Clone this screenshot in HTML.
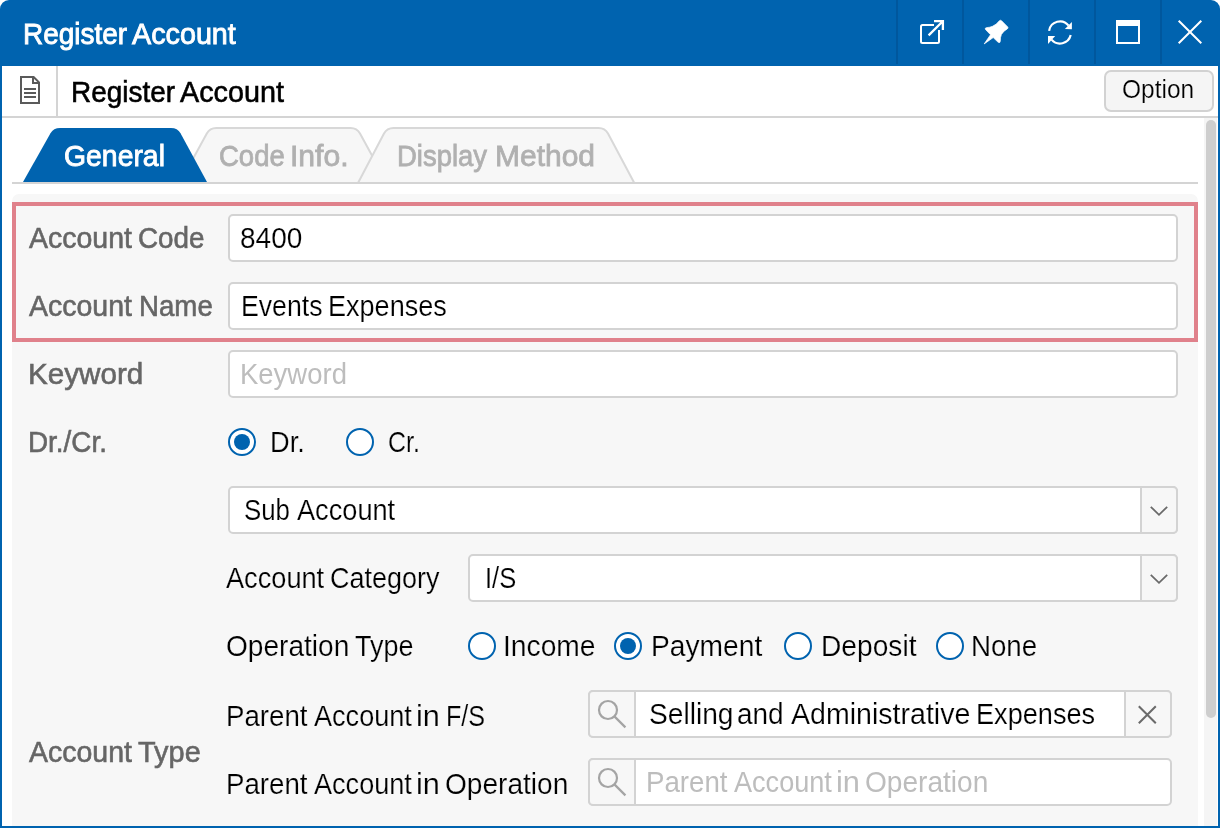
<!DOCTYPE html>
<html lang="en">
<head>
<meta charset="utf-8">
<title>Register Account</title>
<style>
html,body{margin:0;padding:0;}
body{width:1220px;height:828px;overflow:hidden;background:#fff;font-family:"Liberation Sans",sans-serif;position:relative;}
#win{position:absolute;left:0;top:0;width:1220px;height:828px;overflow:hidden;background:#fff;}
.abs{position:absolute;}
.t{position:absolute;display:block;height:1px;line-height:1px;white-space:nowrap;transform-origin:0 0;font-weight:normal;filter:grayscale(1);}
#titlebar{left:0;top:0;width:1220px;height:66px;background:#0063af;border-radius:9px 9px 0 0;}
.bl{background:#0063af;}
.tsep{top:0;width:2px;height:64px;background:#00579d;}
.ln{background:#d4d4d4;}
#panel{left:12px;top:194px;width:1186px;height:640px;background:#f7f7f7;border-radius:7px 7px 0 0;}
#hl{left:12px;top:202px;width:1178px;height:132px;border:4px solid #e0818b;}
.inp{background:#fff;border:2px solid #d3d3d3;border-radius:5px;box-sizing:border-box;}
.radio{width:28px;height:28px;box-sizing:border-box;border:2px solid #0063af;border-radius:50%;background:#fff;}
.radio.on::after{content:"";position:absolute;left:4px;top:4px;width:16px;height:16px;border-radius:50%;background:#0063af;}
.btnbox{background:#f7f7f7;border:2px solid #d3d3d3;box-sizing:border-box;}
svg{position:absolute;overflow:visible;}
</style>
</head>
<body>
<div id="win">
  <!-- title bar -->
  <div id="titlebar" class="abs"></div>
  <div class="abs tsep" style="left:896px"></div>
  <div class="abs tsep" style="left:962px"></div>
  <div class="abs tsep" style="left:1028px"></div>
  <div class="abs tsep" style="left:1094px"></div>
  <div class="abs tsep" style="left:1160px"></div>
  <svg class="abs" style="left:0;top:0" width="1220" height="66" viewBox="0 0 1220 66" fill="none" stroke="#fff" stroke-width="2">
    <!-- popup -->
    <path d="M934,25 L922.5,25 Q921,25 921,26.5 L921,41.5 Q921,43 922.5,43 L937.5,43 Q939,43 939,41.5 L939,30"/>
    <path stroke-width="2.3" d="M928.6,35.4 L942.8,21.2 M934,21.1 L942.9,21.1 L942.9,30"/>
    <!-- pin -->
    <path stroke="#fff" stroke-width="0.7" stroke-linejoin="round" fill="#fff" d="M999.2,20.9 Q1000.4,19.6 1001.6,20.8 L1007.7,26.9 Q1008.7,28.1 1007.3,28.9 Q1003.2,31 1001.4,34.5 Q1000.2,37.5 1000.3,41 Q1000.2,43.4 998.2,42.3 L993.2,37.6 L984.2,43.9 L990.5,34.7 L985.5,29.5 Q984.6,28 986.3,27.7 Q990,27.4 992.5,26.3 Q996.5,24.6 999.2,20.9 Z"/>
    <!-- refresh -->
    <path stroke-width="2.2" d="M1049.1,30.8 A11,11 0 0 1 1068.6,25.6"/>
    <path stroke="none" fill="#fff" d="M1071.9,21.9 L1071.9,29.2 L1064.9,29 Z"/>
    <path stroke-width="2.2" d="M1070.7,35.1 A11,11 0 0 1 1051.6,39.6"/>
    <path stroke="none" fill="#fff" d="M1048,36.1 L1055.2,36.1 L1048,43.9 Z"/>
    <!-- maximize -->
    <rect x="1117" y="21" width="22" height="22"/>
    <rect x="1116" y="20" width="24" height="6" fill="#fff" stroke="none"/>
    <!-- close -->
    <path d="M1178.7,20.7 L1201.3,43.3 M1201.3,20.7 L1178.7,43.3"/>
  </svg>
  <!-- doc icon -->
  <svg class="abs" style="left:0;top:66px" width="60" height="50" viewBox="0 66 60 50" fill="none" stroke="#5a5a5a" stroke-width="2">
    <path d="M21,77 L33.6,77 L39,82.4 L39,103 L21,103 Z"/>
    <path d="M33,77 L33,83 L39,83"/>
    <path d="M24,89 L36,89 M24,93 L36,93 M24,97 L36,97"/>
  </svg>
  <!-- window borders -->
  <div class="abs bl" style="left:0;top:60px;width:2px;height:768px"></div>
  <div class="abs bl" style="left:1218px;top:60px;width:2px;height:768px"></div>
  <!-- toolbar -->
  <div class="abs ln" style="left:2px;top:116px;width:1216px;height:2px"></div>
  <div class="abs ln" style="left:56px;top:66px;width:2px;height:50px"></div>
  <div class="abs" style="left:1104px;top:70px;width:110px;height:42px;box-sizing:border-box;border:2px solid #d2d2d2;border-radius:7px;background:#f5f5f5"></div>
  <!-- scrollbar -->
  <div class="abs" style="left:1204px;top:118px;width:13px;height:708px;background:#f5f5f5"></div>
  <div class="abs" style="left:1206px;top:120px;width:10px;height:598px;background:#cecece;border-radius:5px"></div>
  <!-- tabs -->
  <svg class="abs" style="left:0;top:0" width="1220" height="200" viewBox="0 0 1220 200">
    <!-- tab 2: Code Info. -->
    <path d="M179.8,183 L206.8,133.5 Q209.8,128 216.3,128 L350.5,128 Q357,128 360,133.5 L387,183 Z" fill="#f7f7f7" stroke="#d8d8d8" stroke-width="2" stroke-linejoin="round"/>
    <!-- tab 3: Display Method -->
    <path d="M358,183 L384,133.5 Q387,128 393.5,128 L598.5,128 Q605,128 608,133.5 L634.3,183 Z" fill="#f7f7f7" stroke="#d8d8d8" stroke-width="2" stroke-linejoin="round"/>
    <!-- tab 1: General (active) -->
    <path d="M23,182 L50.5,133.3 Q53.5,128 60,128 L171,128 Q177.5,128 180.5,133.3 L207,182 Z" fill="#0063af"/>
  </svg>
  <div class="abs ln" style="left:12px;top:182px;width:1186px;height:2px"></div>
  <!-- panel -->
  <div id="panel" class="abs"></div>
  <div id="hl" class="abs"></div>
  <!-- inputs -->
  <div class="abs inp" style="left:228px;top:214px;width:950px;height:48px"></div>
  <div class="abs inp" style="left:228px;top:282px;width:950px;height:48px"></div>
  <div class="abs inp" style="left:228px;top:350px;width:950px;height:48px"></div>
  <div class="abs radio on" style="left:228px;top:428px"></div>
  <div class="abs radio" style="left:346px;top:428px"></div>
  <!-- selects -->
  <div class="abs inp" style="left:228px;top:486px;width:950px;height:48px"></div>
  <div class="abs btnbox" style="left:1140px;top:486px;width:38px;height:48px;border-radius:0 5px 5px 0"></div>
  <div class="abs inp" style="left:468px;top:554px;width:710px;height:48px"></div>
  <div class="abs btnbox" style="left:1140px;top:554px;width:38px;height:48px;border-radius:0 5px 5px 0"></div>
  <!-- operation type radios -->
  <div class="abs radio" style="left:468px;top:632px"></div>
  <div class="abs radio on" style="left:614px;top:632px"></div>
  <div class="abs radio" style="left:784px;top:632px"></div>
  <div class="abs radio" style="left:936px;top:632px"></div>
  <!-- search boxes -->
  <div class="abs inp" style="left:588px;top:690px;width:584px;height:48px"></div>
  <div class="abs btnbox" style="left:588px;top:690px;width:48px;height:48px;border-radius:5px 0 0 5px"></div>
  <div class="abs btnbox" style="left:1124px;top:690px;width:48px;height:48px;border-radius:0 5px 5px 0"></div>
  <div class="abs inp" style="left:588px;top:758px;width:584px;height:48px"></div>
  <div class="abs btnbox" style="left:588px;top:758px;width:48px;height:48px;border-radius:5px 0 0 5px"></div>
  <svg class="abs" style="left:0;top:480px" width="1220" height="348" viewBox="0 480 1220 348" fill="none" stroke="#6a6a6a" stroke-width="2">
    <path stroke-width="1.8" d="M1150.8,506.8 L1159,514.8 L1167.2,506.8"/>
    <path stroke-width="1.8" d="M1150.8,574.8 L1159,582.8 L1167.2,574.8"/>
    <g stroke="#a4a4a4" stroke-width="2.2">
      <circle cx="608" cy="710" r="9"/><path d="M614.4,716.4 L625.4,727.4"/>
      <circle cx="608" cy="778" r="9"/><path d="M614.4,784.4 L625.4,795.4"/>
    </g>
    <path d="M1138.8,706.2 L1155.8,723.2 M1155.8,706.2 L1138.8,723.2"/>
  </svg>
  <!-- bottom border -->
  <div class="abs bl" style="left:0;top:826px;width:1220px;height:2px"></div>
  <!-- texts -->
<span class="t" style="left:22.68px;top:33.0px;font-size:30.2px;color:#ffffff;transform:scaleX(0.9257);-webkit-text-stroke:0.9px #ffffff;">Register</span>
<span class="t" style="left:131.56px;top:33.0px;font-size:30.2px;color:#ffffff;transform:scaleX(0.9520);-webkit-text-stroke:0.9px #ffffff;">Account</span>
<span class="t" style="left:70.56px;top:91.0px;font-size:30.2px;color:#000000;transform:scaleX(0.9261);-webkit-text-stroke:0.6px #000000;">Register</span>
<span class="t" style="left:179.74px;top:91.0px;font-size:30.2px;color:#000000;transform:scaleX(0.9524);-webkit-text-stroke:0.6px #000000;">Account</span>
<span class="t" style="left:1122.25px;top:88.5px;font-size:25.8px;color:#000000;transform:scaleX(0.9488);-webkit-text-stroke:0.2px #f5f5f5;">Option</span>
<span class="t" style="left:64.33px;top:155.0px;font-size:30.2px;color:#ffffff;transform:scaleX(0.9399);-webkit-text-stroke:0.9px #ffffff;">General</span>
<span class="t" style="left:218.53px;top:155.0px;font-size:30.2px;color:#b0b0b0;transform:scaleX(0.9109);-webkit-text-stroke:0.8px #b0b0b0;">Code</span>
<span class="t" style="left:289.57px;top:155.0px;font-size:30.2px;color:#b0b0b0;transform:scaleX(0.9978);-webkit-text-stroke:0.8px #b0b0b0;">Info.</span>
<span class="t" style="left:396.58px;top:155.0px;font-size:30.2px;color:#b0b0b0;transform:scaleX(0.9090);-webkit-text-stroke:0.8px #b0b0b0;">Display</span>
<span class="t" style="left:494.68px;top:155.0px;font-size:30.2px;color:#b0b0b0;transform:scaleX(0.9936);-webkit-text-stroke:0.8px #b0b0b0;">Method</span>
<span class="t" style="left:28.54px;top:237.0px;font-size:30.2px;color:#666666;transform:scaleX(0.9441);-webkit-text-stroke:0.6px #666666;">Account</span>
<span class="t" style="left:138.04px;top:237.0px;font-size:30.2px;color:#666666;transform:scaleX(0.9218);-webkit-text-stroke:0.6px #666666;">Code</span>
<span class="t" style="left:28.54px;top:305.0px;font-size:30.2px;color:#666666;transform:scaleX(0.9441);-webkit-text-stroke:0.6px #666666;">Account</span>
<span class="t" style="left:138.58px;top:305.0px;font-size:30.2px;color:#666666;transform:scaleX(0.9161);-webkit-text-stroke:0.6px #666666;">Name</span>
<span class="t" style="left:28.12px;top:373.0px;font-size:30.2px;color:#666666;transform:scaleX(0.9822);-webkit-text-stroke:0.6px #666666;">Keyword</span>
<span class="t" style="left:28.26px;top:441.0px;font-size:30.2px;color:#666666;transform:scaleX(0.9222);-webkit-text-stroke:0.6px #666666;">Dr./Cr.</span>
<span class="t" style="left:28.54px;top:751.0px;font-size:30.2px;color:#666666;transform:scaleX(0.9441);-webkit-text-stroke:0.6px #666666;">Account</span>
<span class="t" style="left:138.19px;top:751.0px;font-size:30.2px;color:#666666;transform:scaleX(0.9583);-webkit-text-stroke:0.6px #666666;">Type</span>
<span class="t" style="left:240.22px;top:237.0px;font-size:30.2px;color:#000000;transform:scaleX(0.9284);-webkit-text-stroke:0.2px #ffffff;">8400</span>
<span class="t" style="left:240.52px;top:305.0px;font-size:30.2px;color:#000000;transform:scaleX(0.8829);-webkit-text-stroke:0.2px #ffffff;">Events</span>
<span class="t" style="left:327.59px;top:305.0px;font-size:30.2px;color:#000000;transform:scaleX(0.8962);-webkit-text-stroke:0.2px #ffffff;">Expenses</span>
<span class="t" style="left:240.25px;top:373.0px;font-size:30.2px;color:#bdbdbd;transform:scaleX(0.9106);">Keyword</span>
<span class="t" style="left:269.67px;top:441.0px;font-size:30.2px;color:#000000;transform:scaleX(0.9014);-webkit-text-stroke:0.2px #f7f7f7;">Dr.</span>
<span class="t" style="left:388.33px;top:441.0px;font-size:30.2px;color:#000000;transform:scaleX(0.8274);-webkit-text-stroke:0.2px #f7f7f7;">Cr.</span>
<span class="t" style="left:244.44px;top:509.0px;font-size:30.2px;color:#000000;transform:scaleX(0.8562);-webkit-text-stroke:0.2px #ffffff;">Sub</span>
<span class="t" style="left:296.60px;top:509.0px;font-size:30.2px;color:#000000;transform:scaleX(0.9000);-webkit-text-stroke:0.2px #ffffff;">Account</span>
<span class="t" style="left:226.30px;top:577.0px;font-size:30.2px;color:#000000;transform:scaleX(0.9000);-webkit-text-stroke:0.2px #f7f7f7;">Account</span>
<span class="t" style="left:329.64px;top:577.0px;font-size:30.2px;color:#000000;transform:scaleX(0.8933);-webkit-text-stroke:0.2px #f7f7f7;">Category</span>
<span class="t" style="left:484.61px;top:577.0px;font-size:30.2px;color:#000000;transform:scaleX(0.8454);-webkit-text-stroke:0.2px #ffffff;">I/S</span>
<span class="t" style="left:225.88px;top:645.0px;font-size:30.2px;color:#000000;transform:scaleX(0.9304);-webkit-text-stroke:0.2px #f7f7f7;">Operation</span>
<span class="t" style="left:355.18px;top:645.0px;font-size:30.2px;color:#000000;transform:scaleX(0.8937);-webkit-text-stroke:0.2px #f7f7f7;">Type</span>
<span class="t" style="left:503.30px;top:645.0px;font-size:30.2px;color:#000000;transform:scaleX(0.9345);-webkit-text-stroke:0.2px #f7f7f7;">Income</span>
<span class="t" style="left:650.90px;top:645.0px;font-size:30.2px;color:#000000;transform:scaleX(0.9340);-webkit-text-stroke:0.2px #f7f7f7;">Payment</span>
<span class="t" style="left:820.60px;top:645.0px;font-size:30.2px;color:#000000;transform:scaleX(0.9327);-webkit-text-stroke:0.2px #f7f7f7;">Deposit</span>
<span class="t" style="left:971.14px;top:645.0px;font-size:30.2px;color:#000000;transform:scaleX(0.9167);-webkit-text-stroke:0.2px #f7f7f7;">None</span>
<span class="t" style="left:226.04px;top:715.0px;font-size:30.2px;color:#000000;transform:scaleX(0.9167);-webkit-text-stroke:0.2px #f7f7f7;">Parent</span>
<span class="t" style="left:313.80px;top:715.0px;font-size:30.2px;color:#000000;transform:scaleX(0.8972);-webkit-text-stroke:0.2px #f7f7f7;">Account</span>
<span class="t" style="left:415.78px;top:715.0px;font-size:30.2px;color:#000000;transform:scaleX(1.0190);-webkit-text-stroke:0.2px #f7f7f7;">in</span>
<span class="t" style="left:445.54px;top:715.0px;font-size:30.2px;color:#000000;transform:scaleX(0.8327);-webkit-text-stroke:0.2px #f7f7f7;">F/S</span>
<span class="t" style="left:648.52px;top:713.0px;font-size:30.2px;color:#000000;transform:scaleX(0.9327);-webkit-text-stroke:0.2px #ffffff;">Selling</span>
<span class="t" style="left:736.93px;top:713.0px;font-size:30.2px;color:#000000;transform:scaleX(0.9257);-webkit-text-stroke:0.2px #ffffff;">and</span>
<span class="t" style="left:791.10px;top:713.0px;font-size:30.2px;color:#000000;transform:scaleX(0.9460);-webkit-text-stroke:0.2px #ffffff;">Administrative</span>
<span class="t" style="left:976.08px;top:713.0px;font-size:30.2px;color:#000000;transform:scaleX(0.8985);-webkit-text-stroke:0.2px #ffffff;">Expenses</span>
<span class="t" style="left:226.04px;top:783.0px;font-size:30.2px;color:#000000;transform:scaleX(0.9167);-webkit-text-stroke:0.2px #f7f7f7;">Parent</span>
<span class="t" style="left:313.80px;top:783.0px;font-size:30.2px;color:#000000;transform:scaleX(0.8972);-webkit-text-stroke:0.2px #f7f7f7;">Account</span>
<span class="t" style="left:415.78px;top:783.0px;font-size:30.2px;color:#000000;transform:scaleX(1.0190);-webkit-text-stroke:0.2px #f7f7f7;">in</span>
<span class="t" style="left:445.38px;top:783.0px;font-size:30.2px;color:#000000;transform:scaleX(0.9304);-webkit-text-stroke:0.2px #f7f7f7;">Operation</span>
<span class="t" style="left:646.14px;top:781.0px;font-size:30.2px;color:#bdbdbd;transform:scaleX(0.9167);">Parent</span>
<span class="t" style="left:733.90px;top:781.0px;font-size:30.2px;color:#bdbdbd;transform:scaleX(0.8972);">Account</span>
<span class="t" style="left:835.88px;top:781.0px;font-size:30.2px;color:#bdbdbd;transform:scaleX(1.0190);">in</span>
<span class="t" style="left:865.48px;top:781.0px;font-size:30.2px;color:#bdbdbd;transform:scaleX(0.9304);">Operation</span>
</div>
</body>
</html>
